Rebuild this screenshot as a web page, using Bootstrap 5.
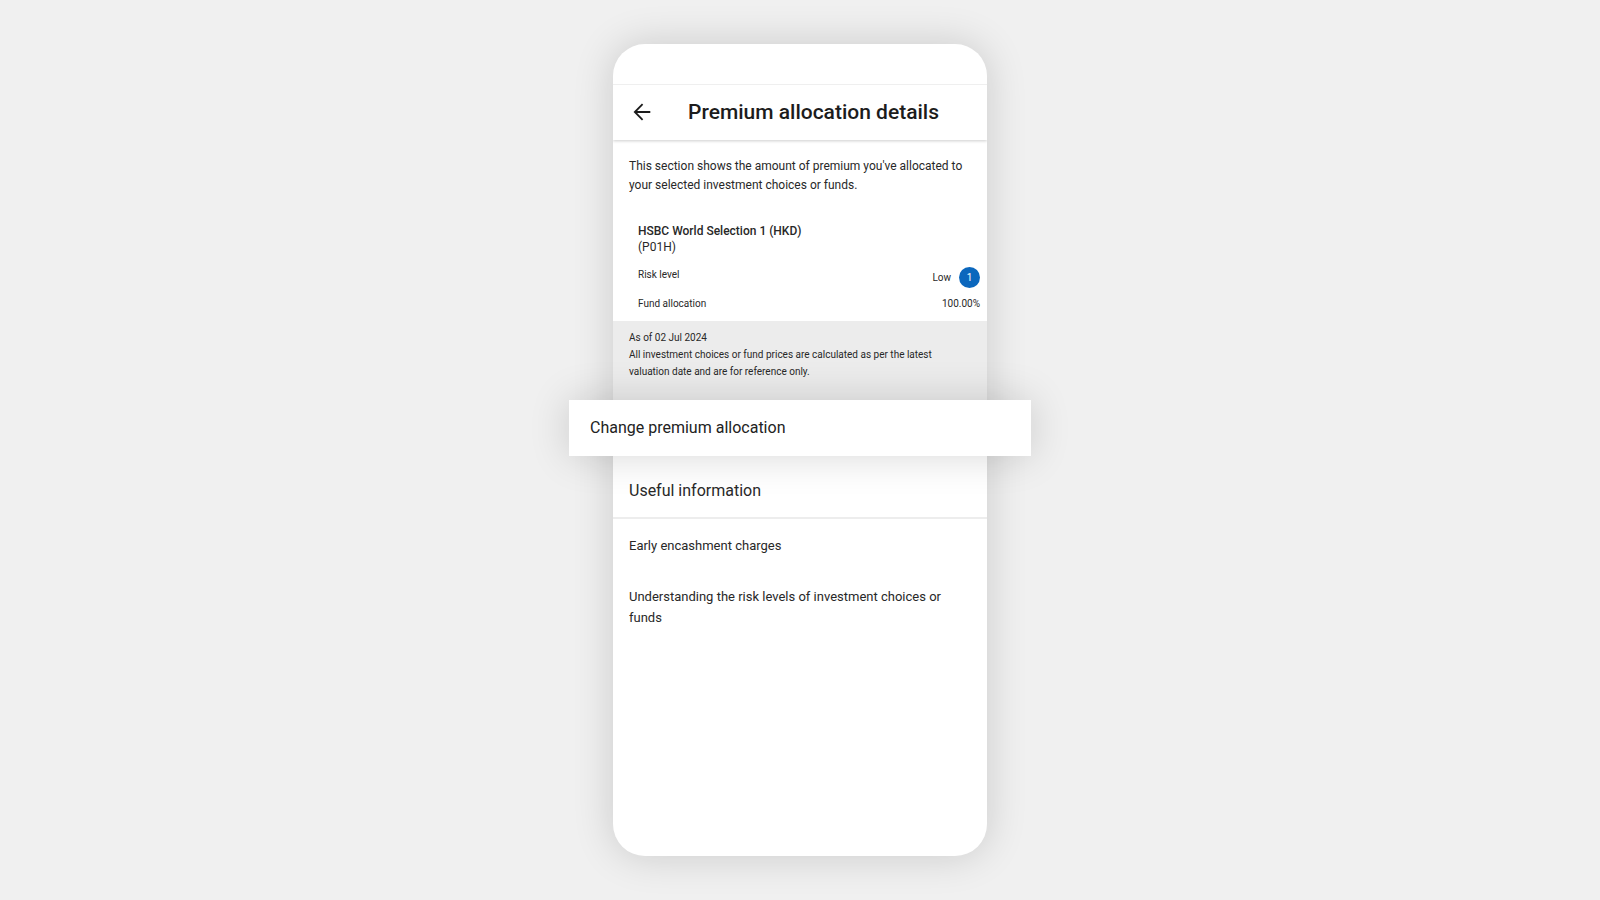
<!DOCTYPE html>
<html lang="en">
<head>
<meta charset="utf-8">
<meta name="viewport" content="width=device-width, initial-scale=1">
<title>Premium allocation details</title>
<link href="https://cdn.jsdelivr.net/npm/bootstrap@5.3.0/dist/css/bootstrap.min.css" rel="stylesheet">
<style>
  body { background: #f0f0f0; color: #282828; font-family: Roboto, "Liberation Sans", sans-serif; }
  .stage { min-height: 100vh; padding: 44px; }
  .phone { width: 100%; max-width: 374px; background: #fff; border-radius: 32px; box-shadow: 0 0 40px rgba(0,0,0,.16); }
  .status-strip { height: 41px; border-bottom: 1px solid #efefef; }
  .app-header { height: 55px; box-shadow: 0 1px 3px rgba(0,0,0,.2); clip-path: inset(0 0 -5px 0); padding: 0 16px 2px 20px; gap: 37px; }
  .app-header h1 { font-size: 21px; line-height: 28px; font-weight: 500; color: #1c1c1c; }
  .back-btn { line-height: 0; color: #1c1c1c; }
  .intro { font-size: 12px; line-height: 19px; padding: 17px 16px 28px; }
  .fund { padding: 0 7px 9px 25px; }
  .fund h2 { font-size: 12px; line-height: 16px; font-weight: 500; }
  .fund-code { font-size: 12px; line-height: 16px; }
  .fund dl { font-size: 10px; line-height: 16px; padding-top: 12px; gap: 8px; }
  .fund dt { font-weight: 400; }
  .risk-dot { width: 21px; height: 21px; background: #0b67bd; font-size: 10px; }
  .note { background: #ececec; font-size: 10px; line-height: 17px; padding: 8px 16px 20px; }
  .change-bar { margin: 0 -44px; padding: 16px 21px; font-size: 16px; line-height: 24px; color: #222; background: #fff; text-align: left; box-shadow: 0 0 40px rgba(0,0,0,.16); }
  .useful h2 { font-size: 16px; line-height: 24px; font-weight: 400; padding: 23px 16px 14px; border-bottom: 2px solid #ededed; }
  .useful a { font-size: 13px; line-height: 21px; color: #282828; padding: 0 16px; }
  .useful ul { padding-top: 16px; gap: 30px; }
</style>
</head>
<body>
<div class="stage d-flex justify-content-center align-items-stretch">
  <main class="phone d-flex flex-column">
    <div class="status-strip"></div>
    <header class="app-header d-flex align-items-center">
      <button type="button" class="back-btn btn border-0 p-0" aria-label="Back">
        <svg width="18" height="18" viewBox="0 0 18 18" fill="none" stroke="currentColor" stroke-width="1.8" aria-hidden="true"><path d="M17.3 9H1.8M9.6 1.2 1.8 9l7.8 7.8"/></svg>
      </button>
      <h1 class="m-0">Premium allocation details</h1>
    </header>
    <p class="intro m-0">This section shows the amount of premium you've allocated to your selected investment choices or funds.</p>
    <section class="fund">
      <h2 class="m-0">HSBC World Selection 1 (HKD)</h2>
      <div class="fund-code">(P01H)</div>
      <dl class="d-flex flex-column m-0">
        <div class="d-flex justify-content-between">
          <dt>Risk level</dt>
          <dd class="m-0 d-flex align-items-center gap-2">Low <span class="risk-dot rounded-circle text-white d-flex align-items-center justify-content-center">1</span></dd>
        </div>
        <div class="d-flex justify-content-between">
          <dt>Fund allocation</dt>
          <dd class="m-0">100.00%</dd>
        </div>
      </dl>
    </section>
    <div class="note">As of 02 Jul 2024<br>All investment choices or fund prices are calculated as per the latest valuation date and are for reference only.</div>
    <button type="button" class="change-bar btn rounded-0 border-0">Change premium allocation</button>
    <section class="useful">
      <h2 class="m-0">Useful information</h2>
      <ul class="list-unstyled m-0 d-flex flex-column">
        <li><a href="#charges" class="d-block text-decoration-none">Early encashment charges</a></li>
        <li><a href="#risk-levels" class="d-block text-decoration-none">Understanding the risk levels of investment choices or funds</a></li>
      </ul>
    </section>
  </main>
</div>
<script src="https://cdn.jsdelivr.net/npm/bootstrap@5.3.0/dist/js/bootstrap.bundle.min.js"></script>
</body>
</html>
